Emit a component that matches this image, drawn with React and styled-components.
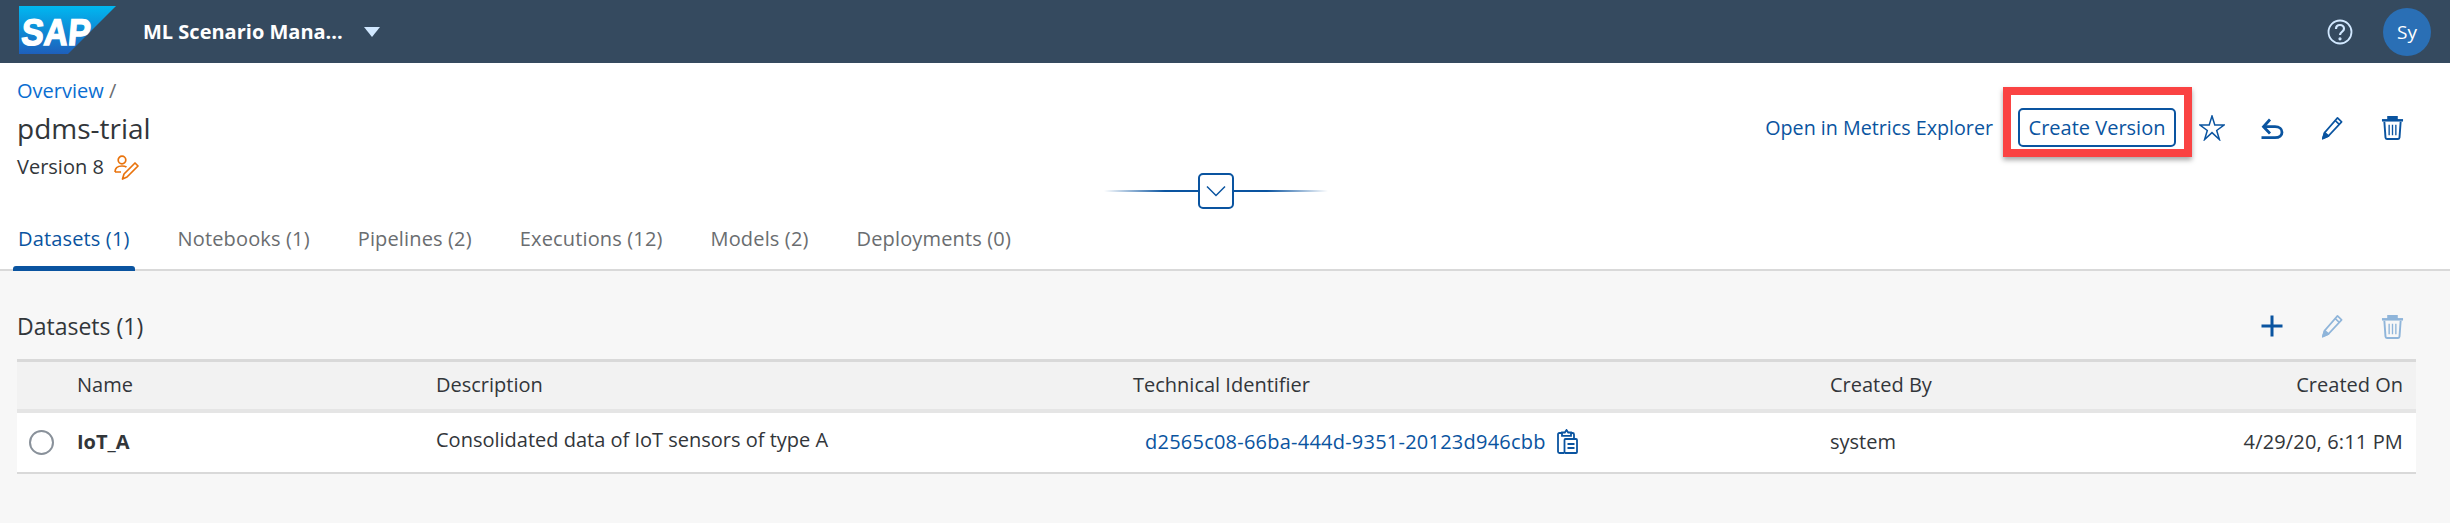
import React from "react";
import styled, { createGlobalStyle } from "styled-components";

const Global = createGlobalStyle`
  html, body { margin: 0; padding: 0; background: #f7f7f7; }
  body { font-family: "Open Sans", "Liberation Sans", sans-serif; color: #32363a; }
`;

const Page = styled.div`
  width: 2450px;
  height: 523px;
  overflow: hidden;
  background: #f7f7f7;
`;

const ShellBar = styled.header`
  height: 63px;
  background: #354a5f;
  display: flex;
  align-items: center;
  padding: 0 19px;
  box-sizing: border-box;
  color: #fff;
`;
const Logo = styled.svg`
  width: 97px;
  height: 48px;
  margin-top: -3px;
  flex: none;
`;
const AppTitle = styled.span`
  margin-left: 27px;
  width: 221px;
  font-size: 20px;
  font-weight: 700;
  white-space: nowrap;
`;
const AppCaret = styled.span`
  width: 0;
  height: 0;
  border-left: 8px solid transparent;
  border-right: 8px solid transparent;
  border-top: 10px solid #d1e8ff;
`;
const ShellRight = styled.div`
  margin-left: auto;
  display: flex;
  align-items: center;
  gap: 30px;
`;
const HelpIcon = styled.svg`
  width: 26px;
  height: 26px;
`;
const Avatar = styled.div`
  width: 48px;
  height: 48px;
  border-radius: 50%;
  background: #2a6fb5;
  display: flex;
  align-items: center;
  justify-content: center;
  font-size: 19px;
`;

const ObjectHeader = styled.section`
  height: 152px;
  background: #fff;
  display: grid;
  grid-template-columns: 1104px 224px 1fr;
  box-sizing: border-box;
`;
const TitleBlock = styled.div`
  padding: 15px 0 0 17px;
`;
const Crumb = styled.div`
  font-size: 20px;
  line-height: 26px;
  color: #6a6d70;
  a { color: #0a6ed1; text-decoration: none; }
`;
const Title = styled.h1`
  margin: 2px 0 0;
  font-size: 28px;
  line-height: 44px;
  font-weight: 400;
`;
const VersionRow = styled.div`
  margin-top: 3px;
  display: flex;
  align-items: center;
  gap: 10px;
  font-size: 20px;
  line-height: 28px;
`;

const Collapse = styled.div`
  height: 36px;
  margin-top: 110px;
  display: flex;
  align-items: center;
  justify-content: center;
`;
const CollapseLine = styled.span`
  flex: 1;
  height: 2px;
  background: linear-gradient(${(p) => (p.$flip ? "to left" : "to right")}, rgba(10, 84, 160, 0), #0a54a0 65%);
`;
const CollapseButton = styled.button`
  width: 36px;
  height: 36px;
  box-sizing: border-box;
  padding: 0;
  border: 2px solid #0a54a0;
  border-radius: 5px;
  background: #fff;
  display: flex;
  align-items: center;
  justify-content: center;
`;

const Actions = styled.div`
  height: 39px;
  margin-top: 45px;
  display: flex;
  justify-content: flex-end;
  align-items: center;
  padding-right: 28px;
`;
const TextAction = styled.span`
  font-size: 19.7px;
  color: #0a54a0;
  margin-right: 25px;
  white-space: nowrap;
`;
const Highlight = styled.div`
  position: relative;
  margin-right: 6px;
  &::after {
    content: "";
    position: absolute;
    inset: -21px -16px -10px -15px;
    border: 8px solid #fa4343;
    box-shadow: 0 3px 5px rgba(0, 0, 0, 0.35);
    pointer-events: none;
  }
`;
const OutlineButton = styled.button`
  display: block;
  width: 158px;
  height: 39px;
  box-sizing: border-box;
  border: 2px solid #0a54a0;
  border-radius: 5px;
  background: #fff;
  color: #0a54a0;
  font: inherit;
  font-size: 20px;
  padding: 0;
  white-space: nowrap;
`;
const IconSlot = styled.span`
  width: 60px;
  display: flex;
  justify-content: center;
  align-items: center;
  color: ${(p) => (p.$muted ? "#8fb5da" : "#0a54a0")};
`;

const TabBar = styled.nav`
  height: 56px;
  box-sizing: border-box;
  background: #fff;
  border-bottom: 2px solid #d9d9d9;
  display: flex;
  gap: 38px;
  padding-left: 13px;
`;
const Tab = styled.div`
  position: relative;
  padding: 0 5px;
  height: 54px;
  line-height: 48px;
  font-size: 20px;
  letter-spacing: 0.15px;
  white-space: nowrap;
  color: ${(p) => (p.$active ? "#0a54a0" : "#6a6d70")};
  ${(p) =>
    p.$active &&
    `&::after {
      content: "";
      position: absolute;
      left: 0;
      right: 0;
      bottom: -2px;
      height: 5px;
      background: #0a54a0;
      border-radius: 3px 3px 0 0;
    }`}
`;

const Content = styled.main`
  padding: 0 34px 0 17px;
`;
const TableToolbar = styled.div`
  height: 88px;
  display: flex;
  align-items: center;
  justify-content: space-between;
  padding-top: 22px;
  box-sizing: border-box;
`;
const TableTitle = styled.h2`
  margin: 0;
  font-size: 23px;
  font-weight: 400;
`;
const ToolbarIcons = styled.div`
  display: flex;
  margin-right: -6px;
`;
const Row = styled.div`
  display: grid;
  grid-template-columns: 60px 359px 697px 697px 1fr;
  align-items: center;
  font-size: 20px;
  box-sizing: border-box;
`;
const HeadRow = styled(Row)`
  height: 54px;
  padding-bottom: 2px;
  background: #f2f2f2;
  border-top: 3px solid #d9d9d9;
  border-bottom: 4px solid #e5e5e5;
`;
const BodyRow = styled(Row)`
  height: 61px;
  padding-bottom: 2px;
  background: #fff;
  border-bottom: 2px solid #d9d9d9;
`;
const Radio = styled.span`
  justify-self: center;
  width: 25px;
  height: 25px;
  box-sizing: border-box;
  border: 2px solid #89919a;
  border-radius: 50%;
  transform: translate(-6px, 1px);
`;
const Cell = styled.div`
  white-space: nowrap;
`;
const NameCell = styled(Cell)`
  font-weight: 700;
`;
const DescCell = styled(Cell)`
  margin-top: -5px;
`;
const IdCell = styled(Cell)`
  display: flex;
  align-items: center;
  gap: 11px;
  padding-left: 12px;
  color: #0a54a0;
  letter-spacing: 0.23px;
`;
const GridEnd = styled.div`
  display: flex;
  justify-content: space-between;
  padding-right: 13px;
  white-space: nowrap;
`;
const DateText = styled.span`
  letter-spacing: 0.15px;
`;

const Star = () => (
  <svg width="26" height="26" viewBox="0 0 24 26" fill="none" stroke="currentColor" strokeWidth="1.500">
    <path d="M12 1l2.800 9H24l-7.300 5.500 2.700 9-7.400-6.900-7.400 6.900 2.700-9L0 10h9.200z" />
  </svg>
);
const Undo = () => (
  <svg width="24" height="26" viewBox="0 0 24 26" fill="none" stroke="currentColor" strokeWidth="2.800">
    <path d="M10 4.500L3.500 11.700l6.500 6.800" />
    <path d="M4 11.700h11c4.500 0 7 2.300 7 5.500s-2.500 5.500-7 5.500H1.500" />
  </svg>
);
const Pencil = () => (
  <svg width="22" height="24" viewBox="0 0 24 26" fill="none" stroke="currentColor" strokeWidth="1.800" strokeLinejoin="round">
    <path d="M18 2l4.500 4.300L8.200 21.600 2 24.500l2-6.500z" />
    <path d="M15.500 4.800l4.400 4.200" />
    <path d="M2 24.500l2-6.500 4.200 3.600z" fill="currentColor" />
  </svg>
);
const Trash = () => (
  <svg width="23" height="25" viewBox="0 0 24 26" fill="none" stroke="currentColor" strokeWidth="2">
    <path d="M1 5.500h22" strokeWidth="2.600" />
    <path d="M7.500 5V2h9v3z" fill="currentColor" />
    <path d="M3.500 7l1.200 16.500c0 .8.600 1.500 1.500 1.500h11.600c.9 0 1.500-.7 1.500-1.500L20.500 7" />
    <path d="M8.500 10v11M12 10v11M15.500 10v11" strokeWidth="1.400" />
  </svg>
);
const Plus = () => (
  <svg width="24" height="24" viewBox="0 0 24 24" fill="none" stroke="currentColor" strokeWidth="3">
    <path d="M12 1.500v21M1.500 12h21" />
  </svg>
);
const Clipboard = () => (
  <svg width="21" height="25" viewBox="0 0 21 25" fill="none" stroke="#0a54a0" strokeWidth="1.800">
    <path d="M5 4H2.500C1.500 4 1 4.600 1 5.500v17c0 .9.500 1.500 1.500 1.500H7" />
    <path d="M5 6.800V3.500h2.800L9.500 1l1.700 2.500H14v3.300z" />
    <path d="M14 4h1.500c1 0 1.500.6 1.500 1.500V9" />
    <rect x="7.500" y="10" width="12.500" height="14" rx="1" />
    <path d="M10.500 15h7M10.500 19h7" strokeWidth="2.200" />
  </svg>
);
const UserEdit = () => (
  <svg width="25" height="25" viewBox="0 0 25 25" fill="none" stroke="#e9730c" strokeWidth="1.700">
    <circle cx="8" cy="5" r="3.800" />
    <path d="M1 17c0-4 2.500-6 7-6 2 0 3.500.4 4.500 1.200M1 17h6" />
    <path d="M21 8l3 3-11 11-4.500 2 1.500-5z" strokeLinejoin="round" />
  </svg>
);

const App = () => (
  <Page>
    <Global />
    <ShellBar>
      <Logo viewBox="0 0 97 48">
        <defs>
          <linearGradient id="sapGradient" x1="0" y1="0" x2="0" y2="1">
            <stop offset="0" stopColor="#00b8f1" />
            <stop offset="1" stopColor="#1e5fbb" />
          </linearGradient>
        </defs>
        <polygon points="0,0 97,0 49,48 0,48" fill="url(#sapGradient)" />
        <text
          x="5"
          y="39"
          transform="skewX(-5)"
          fontFamily="Liberation Sans"
          fontWeight="700"
          fontSize="37"
          fill="#fff"
          stroke="#fff"
          strokeWidth="1.400"
          textLength="69"
          lengthAdjust="spacingAndGlyphs"
        >
          SAP
        </text>
      </Logo>
      <AppTitle>ML Scenario Mana...</AppTitle>
      <AppCaret />
      <ShellRight>
        <HelpIcon viewBox="0 0 26 26" fill="none" stroke="#d1e8ff" strokeWidth="1.800">
          <circle cx="13" cy="13" r="11.500" />
          <path d="M9 10c0-2.500 1.800-4 4-4s4 1.500 4 3.700c0 3-4 3.100-4 6.300" strokeWidth="2.200" />
          <circle cx="13" cy="19.800" r="0.700" />
        </HelpIcon>
        <Avatar>Sy</Avatar>
      </ShellRight>
    </ShellBar>

    <ObjectHeader>
      <TitleBlock>
        <Crumb>
          <a href="#overview">Overview</a> /
        </Crumb>
        <Title>pdms-trial</Title>
        <VersionRow>
          Version 8 <UserEdit />
        </VersionRow>
      </TitleBlock>
      <Collapse>
        <CollapseLine />
        <CollapseButton>
          <svg width="20" height="12" viewBox="0 0 20 12" fill="none" stroke="#0a54a0" strokeWidth="1.500">
            <path d="M1 1.500l9 9 9-9" />
          </svg>
        </CollapseButton>
        <CollapseLine $flip />
      </Collapse>
      <Actions>
        <TextAction>Open in Metrics Explorer</TextAction>
        <Highlight>
          <OutlineButton>Create Version</OutlineButton>
        </Highlight>
        <IconSlot><Star /></IconSlot>
        <IconSlot><Undo /></IconSlot>
        <IconSlot><Pencil /></IconSlot>
        <IconSlot><Trash /></IconSlot>
      </Actions>
    </ObjectHeader>

    <TabBar>
      <Tab $active>Datasets (1)</Tab>
      <Tab>Notebooks (1)</Tab>
      <Tab>Pipelines (2)</Tab>
      <Tab>Executions (12)</Tab>
      <Tab>Models (2)</Tab>
      <Tab>Deployments (0)</Tab>
    </TabBar>

    <Content>
      <TableToolbar>
        <TableTitle>Datasets (1)</TableTitle>
        <ToolbarIcons>
          <IconSlot><Plus /></IconSlot>
          <IconSlot $muted><Pencil /></IconSlot>
          <IconSlot $muted><Trash /></IconSlot>
        </ToolbarIcons>
      </TableToolbar>
      <HeadRow>
        <span />
        <Cell>Name</Cell>
        <Cell>Description</Cell>
        <Cell>Technical Identifier</Cell>
        <GridEnd>
          <span>Created By</span>
          <span>Created On</span>
        </GridEnd>
      </HeadRow>
      <BodyRow>
        <Radio />
        <NameCell>IoT_A</NameCell>
        <DescCell>Consolidated data of IoT sensors of type A</DescCell>
        <IdCell>
          d2565c08-66ba-444d-9351-20123d946cbb <Clipboard />
        </IdCell>
        <GridEnd>
          <span>system</span>
          <DateText>4/29/20, 6:11 PM</DateText>
        </GridEnd>
      </BodyRow>
    </Content>
  </Page>
);

export default App;
